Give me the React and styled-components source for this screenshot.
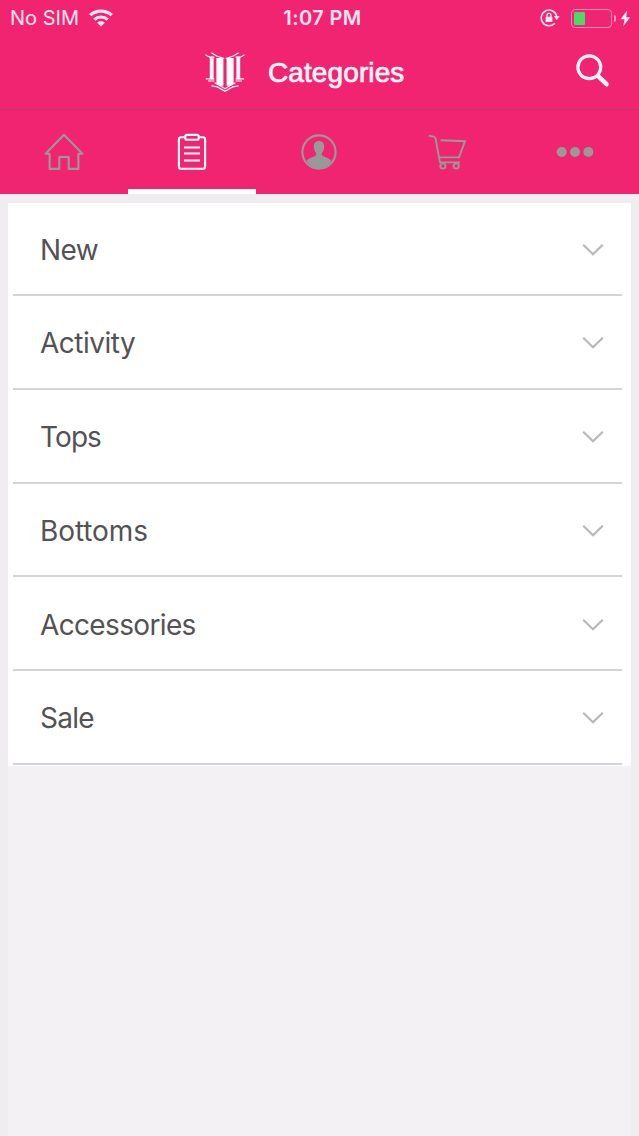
import styled, { createGlobalStyle } from "styled-components"

const GlobalStyle = createGlobalStyle`
  * {
    box-sizing: border-box;
  }
  body {
    margin: 0;
    background-color: #efedef;
  }
`

const categories = [
  { name: "New", spacing: "-0.6px" },
  { name: "Activity", spacing: "-0.5px" },
  { name: "Tops", spacing: "-0.9px" },
  { name: "Bottoms", spacing: "-0.1px" },
  { name: "Accessories", spacing: "-0.65px" },
  { name: "Sale", spacing: "-0.7px" },
]

const WifiIcon = () => (
  <svg width="24" height="18" viewBox="0 0 24 18" fill="none" stroke="#ffe6f1" strokeWidth="3.2">
    <path d="M1.2 6.2 C7 0.7 17 0.7 22.8 6.2" />
    <path d="M5.3 10.6 C9 7.1 15 7.1 18.7 10.6" />
    <path d="M12 17.4 L8.1 13.7 C10.3 11.8 13.7 11.8 15.9 13.7 Z" fill="#ffe6f1" stroke="none" />
  </svg>
)

const RotationLockIcon = () => (
  <svg width="20" height="18" viewBox="0 0 20 18" fill="none" stroke="#ffe6f1">
    <path d="M16.7 7.2 A7.8 7.8 0 1 0 14.8 14.2" strokeWidth="1.6" />
    <path d="M13.8 7 H19.6 L16.7 11.2 Z" fill="#ffe6f1" stroke="none" />
    <rect x="5.6" y="7.8" width="6.8" height="5.2" rx="0.6" fill="#ffe6f1" stroke="none" />
    <path d="M7 8.2 V6.3 A2 2 0 0 1 11 6.3 V8.2" strokeWidth="1.3" />
  </svg>
)

const BoltIcon = () => (
  <svg width="11" height="17" viewBox="0 0 11 17" fill="#ffeef5">
    <path d="M7.3 0.3 L0.6 9.2 H4.6 L3.1 16.5 L10.2 7.2 H6.1 Z" />
  </svg>
)

const Logo = () => (
  <svg width="40" height="40" viewBox="0 0 40 40" fill="#fff">
    <path d="M4.8 4.6 H8.6 V27.2 H4.8 Z M35.2 4.6 H31.4 V27.2 H35.2 Z" />
    <path d="M11.4 6 H18.4 V33.6 L16 34 L11.4 31.4 Z M28.6 6 H21.6 V33.6 L24 34 L28.6 31.4 Z" />
    <g fill="none" stroke="#fff" strokeWidth="1.1">
      <path d="M0.4 2.8 L4.8 5.2 H9.4 M39.6 2.8 L35.2 5.2 H30.6" />
      <path d="M6.4 0.8 L11.6 4 L19.2 6.6 M33.6 0.8 L28.4 4 L20.8 6.6" />
      <path d="M0.8 26.9 H9.4 M39.2 26.9 H30.6 M3 29 H9.4 M37 29 H30.6" />
      <path d="M6.4 33.9 L12.4 34.9 L20 39.3 L27.6 34.9 L33.6 33.9" />
      <path d="M9.6 30.8 L16 34.2 L20 36.6 L24 34.2 L30.4 30.8" />
    </g>
  </svg>
)

const SearchIcon = () => (
  <svg width="34" height="34" viewBox="0 0 34 34" fill="none" stroke="#fff5f9">
    <circle cx="13.3" cy="13.2" r="11.4" strokeWidth="3.2" />
    <path d="M22.1 22.1 L30.6 30.2" strokeWidth="4.6" strokeLinecap="round" />
    <path d="M20.8 20.9 L23.5 23.4" strokeWidth="2.8" />
  </svg>
)

const HomeIcon = () => (
  <svg width="40" height="38" viewBox="0 0 40 38" fill="none" stroke="#999" strokeWidth="2.1">
    <path d="M20 1.8 L38.4 20.7 H34.4 V35.9 H24.7 V24 H15.3 V35.9 H5.6 V20.7 H1.6 Z" strokeLinejoin="round" />
  </svg>
)

const ClipboardIcon = () => (
  <svg width="30" height="38" viewBox="0 0 30 38" fill="none" stroke="#fff" strokeWidth="2.1">
    <path d="M8.3 4.2 H4.2 Q1.9 4.2 1.9 6.5 V33.4 Q1.9 35.7 4.2 35.7 H25.8 Q28.1 35.7 28.1 33.4 V6.5 Q28.1 4.2 25.8 4.2 H21.7" />
    <rect x="8.3" y="1.9" width="13.4" height="4.8" rx="1.8" />
    <path d="M7 14.5 H23 M7 20.5 H23 M7 27.5 H23" strokeWidth="1.8" />
  </svg>
)

const ProfileIcon = () => (
  <svg width="36" height="36" viewBox="0 0 36 36">
    <circle cx="18" cy="18" r="16.6" fill="none" stroke="#999" strokeWidth="2.1" />
    <path
      fill="#999"
      d="M18 7 C21.5 7 23.3 9.3 23.2 12.6 C23.1 16 22 18 20.8 19.2 V21 C21.6 22.8 28 23.3 30.3 27 C27.6 31.6 23.2 34 18 34 C12.8 34 8.4 31.6 5.7 27 C8 23.3 14.4 22.8 15.2 21 V19.2 C14 18 12.9 16 12.8 12.6 C12.7 9.3 14.5 7 18 7 Z"
    />
  </svg>
)

const CartIcon = () => (
  <svg width="38" height="36" viewBox="0 0 38 36" fill="none" stroke="#999" strokeWidth="1.9">
    <path d="M0.8 1.7 L5.6 2.6 Q7.2 3 7.7 5 L11 23.4 H31 L37 7.2 L12.6 6.2" />
    <path d="M11 23.4 L12 28.4 H32" />
    <circle cx="14.9" cy="32" r="2.6" />
    <circle cx="28.2" cy="32" r="2.6" />
  </svg>
)

const MoreIcon = () => (
  <svg width="38" height="12" viewBox="0 0 38 12" fill="#999">
    <circle cx="5.7" cy="6" r="5" />
    <circle cx="19" cy="6" r="5" />
    <circle cx="32.3" cy="6" r="5" />
  </svg>
)

const ChevronIcon = () => (
  <svg width="22" height="14" viewBox="0 0 22 14" fill="none" stroke="#b9b7ba" strokeWidth="2.2">
    <path d="M1.2 1.7 L11 11.3 L20.8 1.7" />
  </svg>
)

export default function App() {
  return (
    <>
      <GlobalStyle />
      <Screen>
        <StatusBar>
          <Carrier>
            No SIM
            <WifiIcon />
          </Carrier>
          <Time>1:07 PM</Time>
          <StatusIcons>
            <RotationLockIcon />
            <Battery>
              <BatteryBody>
                <BatteryLevel />
              </BatteryBody>
              <BatteryTip />
            </Battery>
            <BoltIcon />
          </StatusIcons>
        </StatusBar>
        <Header>
          <Brand>
            <Logo />
            <Title>Categories</Title>
          </Brand>
          <SearchIcon />
        </Header>
        <TabBar>
          <Tab><HomeIcon /></Tab>
          <Tab $active><ClipboardIcon /></Tab>
          <Tab><ProfileIcon /></Tab>
          <Tab><CartIcon /></Tab>
          <Tab><MoreIcon /></Tab>
        </TabBar>
        <Content>
          <CategoryList>
            {categories.map((category) => (
              <CategoryRow key={category.name}>
                <CategoryName $spacing={category.spacing}>{category.name}</CategoryName>
                <ChevronIcon />
              </CategoryRow>
            ))}
          </CategoryList>
        </Content>
      </Screen>
    </>
  )
}

const Screen = styled.div`
  display: flex;
  flex-direction: column;
  width: 639px;
  height: 1136px;
  overflow: hidden;
  font-family: Inter, "Liberation Sans", sans-serif;
  svg {
    display: block;
    flex-shrink: 0;
  }
`

const StatusBar = styled.div`
  display: grid;
  grid-template-columns: 1fr auto 1fr;
  align-items: center;
  height: 36px;
  padding: 0 8px 0 10px;
  background-color: #f12471;
  color: #ffe6f1;
  font-size: 20px;
  line-height: 36px;
`

const Carrier = styled.div`
  display: flex;
  align-items: center;
  gap: 10px;
`

const Time = styled.div`
  font-weight: 600;
  padding-left: 4px;
  letter-spacing: 0.4px;
`

const StatusIcons = styled.div`
  display: flex;
  align-items: center;
  justify-content: flex-end;
`

const Battery = styled.div`
  display: flex;
  align-items: center;
  gap: 2px;
  margin: 0 4px 0 11px;
`

const BatteryBody = styled.div`
  width: 41px;
  height: 19px;
  padding: 2px;
  border: 1.5px solid #fa8fb8;
  border-radius: 4px;
`

const BatteryLevel = styled.div`
  width: 11px;
  height: 13px;
  background-color: #4cd964;
  border-radius: 1px;
`

const BatteryTip = styled.div`
  width: 2px;
  height: 7px;
  background-color: #fa8fb8;
  border-radius: 0 2px 2px 0;
`

const Header = styled.header`
  display: flex;
  align-items: center;
  justify-content: space-between;
  height: 73px;
  padding: 0 29px 2px 205px;
  background-color: #f12471;
  > svg {
    margin-bottom: 2px;
  }
`

const Brand = styled.div`
  display: flex;
  align-items: center;
  gap: 23px;
`

const Title = styled.h1`
  margin: 0;
  padding-top: 2px;
  color: #fff5f9;
  font-family: "Liberation Sans", Arial, sans-serif;
  font-size: 28px;
  font-weight: 400;
  line-height: 32px;
  letter-spacing: 0.1px;
  -webkit-text-stroke: 0.7px #fff5f9;
`

const TabBar = styled.nav`
  display: grid;
  grid-template-columns: repeat(5, 1fr);
  height: 85px;
  border-top: 1px solid #b33f70;
  background-color: #f12471;
`

const Tab = styled.div`
  display: flex;
  align-items: center;
  justify-content: center;
  padding-top: 4px;
  border-bottom: 5px solid ${(props) => (props.$active ? "#fff" : "transparent")};
`

const Content = styled.main`
  flex: 1;
  margin: 9px 8px 0;
  background-color: #f3f1f4;
`

const CategoryList = styled.div`
  display: grid;
  grid-template-rows: 93px repeat(5, 93.75px);
  padding: 0 9px 1px 5px;
  background-color: #fff;
`

const CategoryRow = styled.div`
  display: flex;
  align-items: center;
  justify-content: space-between;
  padding: 3px 18px 0 27px;
  border-bottom: 2px solid #d5d3d7;
`

const CategoryName = styled.span`
  color: #545254;
  font-size: 28px;
  line-height: 34px;
  letter-spacing: ${(props) => props.$spacing};
`
